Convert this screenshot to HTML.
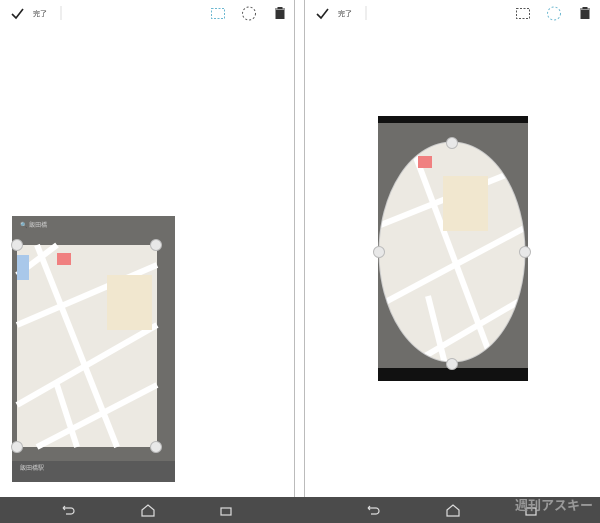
<!DOCTYPE html><html><head><meta charset="utf-8"><style>
body{margin:0;width:600px;height:523px;background:#fff;position:relative;overflow:hidden;font-family:"Liberation Sans","Noto Sans CJK JP",sans-serif}
.abs{position:absolute}
.nav{left:0;top:497px;width:600px;height:26px;background:#4b4b4b}
.h{position:absolute;width:10px;height:10px;border-radius:50%;background:#e8e8e8;border:1px solid #bbb}
</style></head><body>
<div class="abs" style="left:294px;top:0;width:1px;height:497px;background:#bbb"></div>
<div class="abs" style="left:304px;top:0;width:1px;height:497px;background:#bbb"></div>
<!-- toolbars -->
<svg class="abs" style="left:0;top:0" width="600" height="30">
<path d="M12 14l4 4 7-9" stroke="#222" stroke-width="1.6" fill="none"/>
<text x="33" y="16" font-size="7" fill="#444">完了</text>
<line x1="61" y1="6" x2="61" y2="20" stroke="#ddd"/>
<rect x="211.5" y="8.5" width="13" height="10" fill="none" stroke="#6bb7d0" stroke-dasharray="2,1.5"/>
<circle cx="249" cy="13.5" r="6.5" fill="none" stroke="#555" stroke-dasharray="2,2"/>
<path d="M275 9h10M278 9v-1.5h4V9M276 10.5h8v8h-8z" stroke="#333" fill="#333" stroke-width="1"/>
<path d="M317 14l4 4 7-9" stroke="#222" stroke-width="1.6" fill="none"/>
<text x="338" y="16" font-size="7" fill="#444">完了</text>
<line x1="366" y1="6" x2="366" y2="20" stroke="#ddd"/>
<rect x="516.5" y="8.5" width="13" height="10" fill="none" stroke="#555" stroke-dasharray="2,1.5"/>
<circle cx="554" cy="13.5" r="6.5" fill="none" stroke="#6bb7d0" stroke-dasharray="2,2"/>
<path d="M580 9h10M583 9v-1.5h4V9M581 10.5h8v8h-8z" stroke="#333" fill="#333" stroke-width="1"/>
</svg>
<!-- left image -->
<svg class="abs" style="left:12px;top:216px" width="163" height="266">
<rect width="163" height="266" fill="#6e6d6a"/>
<rect x="0" y="245" width="163" height="21" fill="#5a5a5a"/>
<text x="8" y="254" font-size="6" fill="#ccc">飯田橋駅</text>
<text x="8" y="11" font-size="6" fill="#ccc">🔍 飯田橋</text>
<g transform="translate(5,29)">
<rect width="140" height="202" fill="#ece9e2"/>
<path d="M0 30 L40 0 M0 80 L140 20 M20 0 L100 202 M0 160 L140 80 M20 202 L140 140 M40 140 L60 202" stroke="#fff" stroke-width="6"/>
<rect x="90" y="30" width="45" height="55" fill="#f1e7cf"/>
<rect x="0" y="10" width="12" height="25" fill="#a9c8ea"/>
<rect x="40" y="8" width="14" height="12" fill="#f08080"/>
</g>
</svg>
<div class="h" style="left:11px;top:239px"></div><div class="h" style="left:150px;top:239px"></div>
<div class="h" style="left:11px;top:441px"></div><div class="h" style="left:150px;top:441px"></div>
<!-- right image -->
<svg class="abs" style="left:378px;top:116px" width="150" height="265">
<rect width="150" height="265" fill="#6e6d6a"/>
<rect width="150" height="7" fill="#111"/>
<rect y="252" width="150" height="13" fill="#111"/>
<defs><clipPath id="e"><ellipse cx="74" cy="136" rx="73" ry="110"/></clipPath></defs>
<g clip-path="url(#e)">
<rect width="150" height="265" fill="#ece9e2"/>
<path d="M0 50 L50 20 M0 110 L150 50 M30 20 L120 260 M0 190 L150 110 M30 250 L150 180 M50 180 L70 260" stroke="#fff" stroke-width="6"/>
<rect x="65" y="60" width="45" height="55" fill="#f1e7cf"/>
<rect x="40" y="40" width="14" height="12" fill="#f08080"/>
</g>
<ellipse cx="74" cy="136" rx="73" ry="110" fill="none" stroke="#ccc"/>
</svg>
<div class="h" style="left:446px;top:137px"></div><div class="h" style="left:446px;top:358px"></div>
<div class="h" style="left:373px;top:246px"></div><div class="h" style="left:519px;top:246px"></div>
<!-- nav -->
<div class="abs nav"></div>
<svg class="abs" style="left:0;top:497px" width="600" height="26" fill="none" stroke="#ddd" stroke-width="1.2">
<path d="M63 11h8a3 3 0 010 6h-5M63 11l2-2M63 11l2 2"/>
<path d="M142 13l6-5 6 5v6h-12z"/>
<rect x="221" y="11" width="10" height="7"/>
<path d="M368 11h8a3 3 0 010 6h-5M368 11l2-2M368 11l2 2"/>
<path d="M447 13l6-5 6 5v6h-12z"/>
<rect x="526" y="11" width="10" height="7"/>
<text x="515" y="13" font-size="13" fill="#999" stroke="none" font-weight="bold">週刊アスキー</text>
</svg>
</body></html>
